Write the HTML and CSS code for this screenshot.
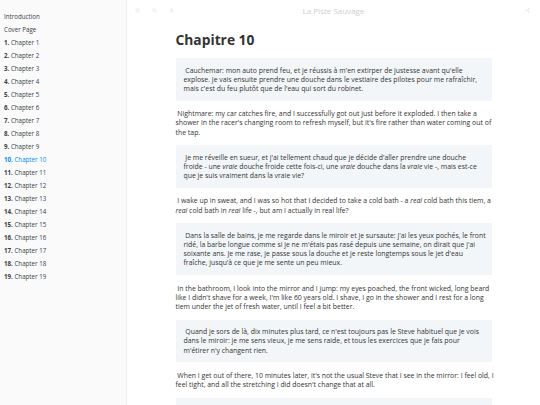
FILE: index.html
```html
<!DOCTYPE html>
<html lang="fr">
<head>
<meta charset="utf-8">
<title>Chapitre 10 · La Piste Sauvage</title>
<link rel="stylesheet" href="styles.css">
</head>
<body>
<div class="book">
  <nav class="sidebar">
    <ul class="summary">
      <li><a>Introduction</a></li>
      <li><a>Cover Page</a></li>
      <li><a><b>1.</b> Chapter 1</a></li>
      <li><a><b>2.</b> Chapter 2</a></li>
      <li><a><b>3.</b> Chapter 3</a></li>
      <li><a><b>4.</b> Chapter 4</a></li>
      <li><a><b>5.</b> Chapter 5</a></li>
      <li><a><b>6.</b> Chapter 6</a></li>
      <li><a><b>7.</b> Chapter 7</a></li>
      <li><a><b>8.</b> Chapter 8</a></li>
      <li><a><b>9.</b> Chapter 9</a></li>
      <li class="active"><a><b>10.</b> Chapter 10</a></li>
      <li><a><b>11.</b> Chapter 11</a></li>
      <li><a><b>12.</b> Chapter 12</a></li>
      <li><a><b>13.</b> Chapter 13</a></li>
      <li><a><b>14.</b> Chapter 14</a></li>
      <li><a><b>15.</b> Chapter 15</a></li>
      <li><a><b>16.</b> Chapter 16</a></li>
      <li><a><b>17.</b> Chapter 17</a></li>
      <li><a><b>18.</b> Chapter 18</a></li>
      <li><a><b>19.</b> Chapter 19</a></li>
    </ul>
  </nav>
  <main class="body">
    <header class="header">
      <div class="tools">
        <svg class="icon" viewBox="0 0 10 10"><path d="M1 2h8M1 4h8M1 6h8M1 8h8" stroke="currentColor" stroke-width="1" fill="none"/></svg>
        <svg class="icon" viewBox="0 0 10 10"><circle cx="4.2" cy="4.2" r="2.8" stroke="currentColor" stroke-width="1.1" fill="none"/><path d="M6.2 6.2L9 9" stroke="currentColor" stroke-width="1.4"/></svg>
        <svg class="icon" viewBox="0 0 10 10"><path d="M2 9L5 1L8 9M3.2 6h3.6" stroke="currentColor" stroke-width="1.2" fill="none"/></svg>
      </div>
      <h1 class="title">La Piste Sauvage</h1>
      <div class="tools right">
        <svg class="icon" viewBox="0 0 10 10"><circle cx="7.5" cy="2" r="1.5" fill="currentColor"/><circle cx="2.5" cy="5" r="1.5" fill="currentColor"/><circle cx="7.5" cy="8" r="1.5" fill="currentColor"/><path d="M7.5 2L2.5 5L7.5 8" stroke="currentColor" stroke-width="0.8" fill="none"/></svg>
      </div>
    </header>
    <section class="page">
      <h2 class="chapter">Chapitre 10</h2>
      <blockquote class="fr"><p>&nbsp;Cauchemar: mon auto prend feu, et je réussis à m'en extirper de justesse avant qu'elle<br>explose. Je vais ensuite prendre une douche dans le vestiaire des pilotes pour me rafraîchir,<br>mais c'est du feu plutôt que de l'eau qui sort du robinet.</p></blockquote>
      <p class="en">&nbsp;Nightmare: my car catches fire, and I successfully got out just before it exploded. I then take a<br>shower in the racer's changing room to refresh myself, but it's fire rather than water coming out of<br>the tap.</p>
      <blockquote class="fr"><p>&nbsp;Je me réveille en sueur, et j'ai tellement chaud que je décide d'aller prendre une douche<br>froide - une <em>vraie</em> douche froide cette fois-ci, une <em>vraie</em> douche dans la <em>vraie</em> vie -, mais est-ce<br>que je suis vraiment dans la vraie vie?</p></blockquote>
      <p class="en">&nbsp;I wake up in sweat, and I was so hot that I decided to take a cold bath - a <em>real</em> cold bath this tiem, a<br><em>real</em> cold bath in <em>real</em> life -, but am I actually in real life?</p>
      <blockquote class="fr"><p>&nbsp;Dans la salle de bains, je me regarde dans le miroir et je sursaute: j'ai les yeux pochés, le front<br>ridé, la barbe longue comme si je ne m'étais pas rasé depuis une semaine, on dirait que j'ai<br>soixante ans. Je me rase, je passe sous la douche et je reste longtemps sous le jet d'eau<br>fraîche, jusqu'à ce que je me sente un peu mieux.</p></blockquote>
      <p class="en">&nbsp;In the bathroom, I look into the mirror and I jump: my eyes poached, the front wicked, long beard<br>like I didn't shave for a week, I'm like 60 years old. I shave, I go in the shower and I rest for a long<br>tiem under the jet of fresh water, until I feel a bit better.</p>
      <blockquote class="fr"><p>&nbsp;Quand je sors de là, dix minutes plus tard, ce n'est toujours pas le Steve habituel que je vois<br>dans le miroir: je me sens vieux, je me sens raide, et tous les exercices que je fais pour<br>m'étirer n'y changent rien.</p></blockquote>
      <p class="en">&nbsp;When I get out of there, 10 minutes later, it's not the usual Steve that I see in the mirror: I feel old, I<br>feel tight, and all the stretching I did doesn't change that at all.</p>
      <blockquote class="fr"><p>&nbsp;Je m'habille et je descends prendre mon petit déjeuner, mais je n'ai pas faim.</p></blockquote>
    </section>
  </main>
</div>
</body>
</html>
```
FILE: styles.css
```css
html, body {
  margin: 0;
  padding: 0;
  height: 100%;
  overflow: hidden;
  background: #fff;
  font-family: "Open Sans", "Liberation Sans", sans-serif;
}

.book {
  display: flex;
  height: 405px;
}

.sidebar {
  width: 127px;
  flex: none;
  background: #fafafa;
  border-right: 1px solid #efefef;
  box-sizing: border-box;
}

.summary {
  list-style: none;
  margin: 0;
  padding: 9.5px 0 0;
}

.summary li a {
  display: block;
  padding: 0 4px;
  height: 13px;
  line-height: 13px;
  font-size: 6.2px;
  color: #364149;
  white-space: nowrap;
}

.summary li a b {
  font-weight: 700;
}

.summary li.active a {
  color: #008cff;
}

.body {
  flex: 1;
  min-width: 0;
  display: flex;
  flex-direction: column;
  overflow: hidden;
}

.header {
  flex: none;
  height: 21px;
  display: flex;
  align-items: center;
  padding: 0 10px 0 8px;
  position: relative;
}

.tools {
  display: flex;
  gap: 12px;
  align-items: center;
  margin-top: -1px;
}

.tools.right {
  margin-left: auto;
}

.icon {
  width: 5px;
  height: 5px;
  color: #e0e0e0;
}

.title {
  position: absolute;
  left: 0;
  right: 0;
  top: 0;
  margin: 0;
  text-align: center;
  font-size: 8px;
  line-height: 21px;
  font-weight: 400;
  color: #cfcfcf;
  pointer-events: none;
}

.page {
  flex: none;
  width: 316px;
  margin: 0 auto;
  color: #333;
  font-size: 6.9px;
  line-height: 9.2px;
  white-space: nowrap;
}

.chapter {
  margin: 11px 0 10px;
  font-size: 13.8px;
  line-height: 16px;
  font-weight: 700;
  color: #333;
}

.fr {
  margin: 0 0 8.5px;
  padding: 7.5px 8px;
  background: #f3f6f9;
}

.fr p {
  margin: 0;
}

.en {
  margin: 0 0 8.5px;
}
```
